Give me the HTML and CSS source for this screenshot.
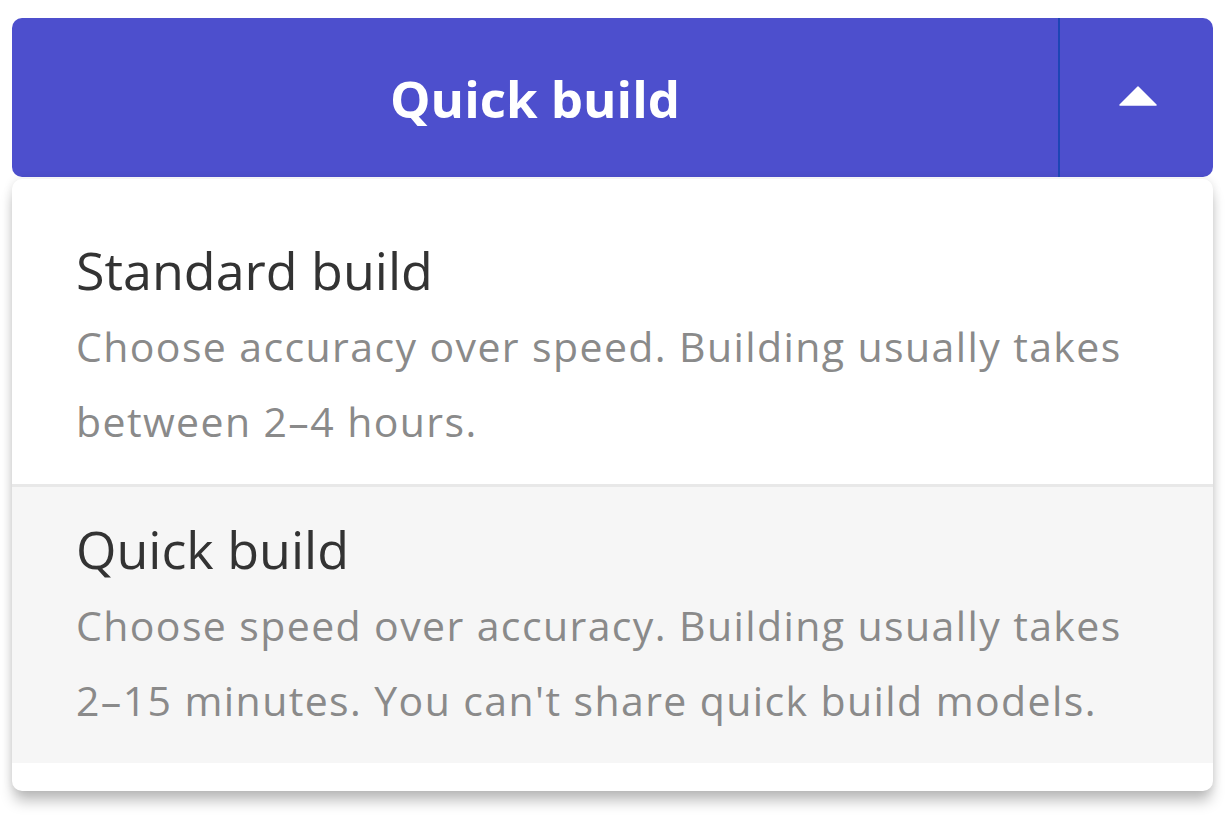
FILE: index.html
```html
<!DOCTYPE html>
<html lang="en">
<head>
    <meta charset="UTF-8">
    <meta name="viewport" content="width=device-width, initial-scale=1.0">
    <title>Build type</title>
    <link rel="stylesheet" href="styles.css">
</head>
<body>

    <div class="build-select">
        <div class="split-btn">
            <button class="main-btn">Quick build</button>
            <button class="toggle-btn" aria-label="Close menu">
                <svg width="38" height="20" viewBox="0 0 38 20">
                    <polygon points="19,1 37,19 1,19" fill="#fff" stroke="#fff" stroke-width="1.5" stroke-linejoin="round"/>
                </svg>
            </button>
        </div>

        <ul class="menu">
            <li class="menu-item">
                <div class="item-title">Standard build</div>
                <div class="item-desc">Choose accuracy over speed. Building usually takes between 2–4 hours.</div>
            </li>
            <li class="menu-item selected">
                <div class="item-title">Quick build</div>
                <div class="item-desc">Choose speed over accuracy. Building usually takes 2–15 minutes. You can't share quick build models.</div>
            </li>
        </ul>
    </div>

</body>
</html>
```

FILE: styles.css
```css
/* General Styles */
body {
    margin: 0;
    padding: 0;
    min-height: 100vh;
    background-color: #ffffff;
    font-family: "Open Sans", "Noto Sans", Arial, sans-serif;
}

.build-select {
    padding: 18px 19px 32px 12px;
}

/* Split button */
.split-btn {
    display: flex;
    height: 159px;
    background-color: #4d4fcd;
    border-radius: 10px;
    overflow: hidden;
}

.split-btn button {
    border: none;
    background: transparent;
    color: white;
    font-family: inherit;
    cursor: pointer;
    padding: 0;
}

.main-btn {
    flex: 1;
    font-size: 51px;
    font-weight: 700;
    border-right: 2px solid #1d45b5 !important;
}

.toggle-btn {
    width: 153px;
    display: flex;
    align-items: center;
    justify-content: center;
}

.toggle-btn svg {
    display: block;
    margin-left: 2px;
    margin-top: -4px;
}

/* Menu */
.menu {
    list-style: none;
    margin: 2px 0 0 0;
    padding: 29px 0 28px 0;
    background-color: white;
    border-radius: 10px;
    box-shadow: 0 12px 14px -2px rgba(0, 0, 0, 0.25), 0 0 10px rgba(0, 0, 0, 0.1);
}

.menu-item {
    padding: 0 60px 0 64px;
    cursor: pointer;
}

.menu-item + .menu-item {
    border-top: 3px solid #e8e8e8;
}

.menu-item.selected {
    background-color: #f6f6f6;
}

.item-title {
    font-size: 52px;
    line-height: 72px;
    color: #333333;
    padding-top: 26px;
}

.item-desc {
    font-size: 41px;
    letter-spacing: 1.4px;
    line-height: 75px;
    color: #8a8a8a;
    margin-top: 3px;
    padding-bottom: 25px;
}
```
